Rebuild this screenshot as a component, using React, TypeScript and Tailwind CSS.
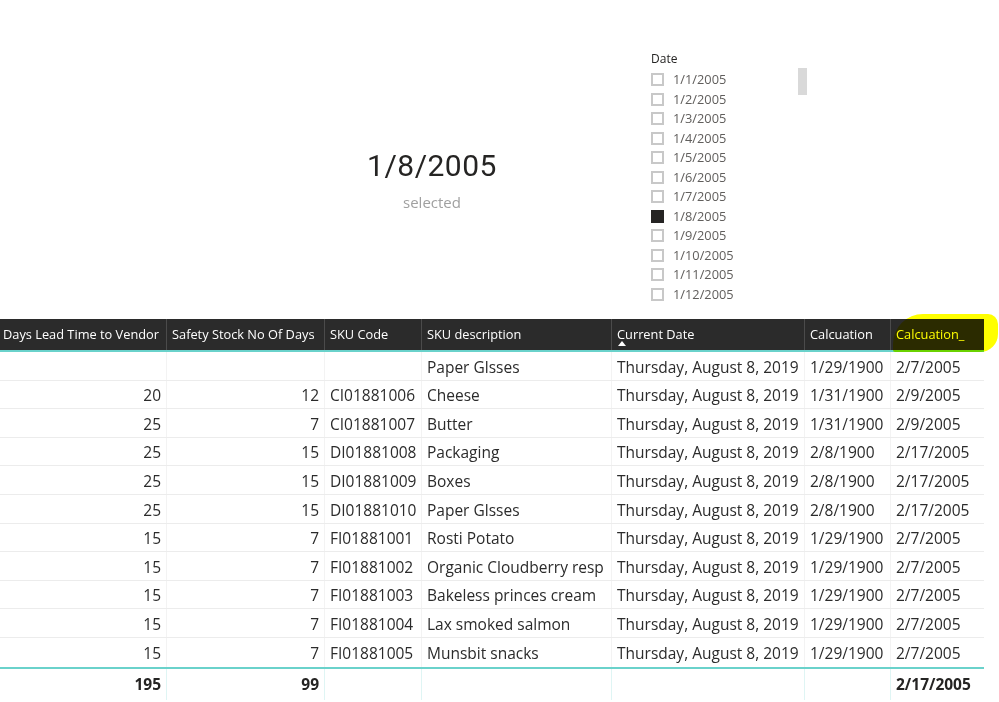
import React from "react";

const rows: string[][] = [
  ["", "", "", "Paper Glsses", "Thursday, August 8, 2019", "1/29/1900", "2/7/2005"],
  ["20", "12", "CI01881006", "Cheese", "Thursday, August 8, 2019", "1/31/1900", "2/9/2005"],
  ["25", "7", "CI01881007", "Butter", "Thursday, August 8, 2019", "1/31/1900", "2/9/2005"],
  ["25", "15", "DI01881008", "Packaging", "Thursday, August 8, 2019", "2/8/1900", "2/17/2005"],
  ["25", "15", "DI01881009", "Boxes", "Thursday, August 8, 2019", "2/8/1900", "2/17/2005"],
  ["25", "15", "DI01881010", "Paper Glsses", "Thursday, August 8, 2019", "2/8/1900", "2/17/2005"],
  ["15", "7", "FI01881001", "Rosti Potato", "Thursday, August 8, 2019", "1/29/1900", "2/7/2005"],
  ["15", "7", "FI01881002", "Organic Cloudberry resp", "Thursday, August 8, 2019", "1/29/1900", "2/7/2005"],
  ["15", "7", "FI01881003", "Bakeless princes cream", "Thursday, August 8, 2019", "1/29/1900", "2/7/2005"],
  ["15", "7", "FI01881004", "Lax smoked salmon", "Thursday, August 8, 2019", "1/29/1900", "2/7/2005"],
  ["15", "7", "FI01881005", "Munsbit snacks", "Thursday, August 8, 2019", "1/29/1900", "2/7/2005"],
];

const headers = [
  "Days Lead Time to Vendor",
  "Safety Stock No Of Days",
  "SKU Code",
  "SKU description",
  "Current Date",
  "Calcuation",
  "Calcuation_",
];

const dates = [
  "1/1/2005",
  "1/2/2005",
  "1/3/2005",
  "1/4/2005",
  "1/5/2005",
  "1/6/2005",
  "1/7/2005",
  "1/8/2005",
  "1/9/2005",
  "1/10/2005",
  "1/11/2005",
  "1/12/2005",
];

const grid = "grid grid-cols-[167px_158px_97px_190px_193px_86px_93px] w-[984px]";

export default function App() {
  return (
    <div
      className="relative w-[999px] h-[702px] bg-white overflow-hidden text-[#252423]"
      style={{ fontFamily: '"Open Sans", "Noto Sans", sans-serif' }}
    >
      {/* top section */}
      <div className="flex h-[319px]">
        <div className="ml-[282px] w-[300px] flex flex-col items-center pt-[144px]">
          <div
            className="text-[30px] leading-[44px] tracking-[0.5px] text-[#252423]"
            style={{ fontFamily: 'Roboto, "Liberation Sans", sans-serif' }}
          >
            1/8/2005
          </div>
          <div className="text-[15px] leading-[20px] text-[#a0a0a0] mt-[4px]">selected</div>
        </div>
        <div className="relative ml-[69px] pt-[50px] w-[160px]">
          <div className="text-[12px] leading-[18px] text-[#252423] mb-[2px]">Date</div>
          <div className="flex flex-col">
            {dates.map((d) => (
              <div key={d} className="flex items-center h-[19.5px]">
                {d === "1/8/2005" ? (
                  <div className="w-[13px] h-[13px] bg-[#252423]" />
                ) : (
                  <div className="w-[13px] h-[13px] border-[2px] border-[#c8c8c8] bg-white" />
                )}
                <span className="ml-[9px] text-[12.8px] leading-[19px] text-[#605e5c]">{d}</span>
              </div>
            ))}
          </div>
          <div className="absolute left-[147px] top-[68px] w-[9px] h-[27px] bg-[#d9d9d9]" />
        </div>
      </div>

      {/* table */}
      <div className="flex flex-col">
        <div className={`${grid} bg-[#2b2b2b] h-[31px]`}>
          {headers.map((h, i) => (
            <div
              key={h}
              className={`flex items-center text-[12.8px] text-white whitespace-nowrap overflow-hidden ${
                i === 0 ? "pl-[3px]" : "pl-[5px]"
              } ${i < 6 ? "border-r border-[#4b4b4b]" : ""}`}
            >
              {h}
            </div>
          ))}
        </div>
        <div className="w-[984px] h-[2px] bg-[#6ad2cb]" />
        {rows.map((r, ri) => (
          <div
            key={ri}
            className={`${grid} h-[28.6px] ${ri < rows.length - 1 ? "border-b border-[#ececec]" : ""}`}
          >
            {r.map((c, ci) => (
              <div
                key={ci}
                className={`flex items-center pt-[3px] text-[15.5px] text-[#2b2b2b] whitespace-nowrap overflow-hidden ${
                  ci < 2 ? "justify-end pr-[5px]" : "pl-[5px]"
                } ${ci < 6 ? "border-r border-[#f3f3f3]" : ""}`}
              >
                {c}
              </div>
            ))}
          </div>
        ))}
        <div className="w-[984px] h-[2px] bg-[#6ad2cb]" />
        <div className={`${grid} h-[31px]`}>
          {["195", "99", "", "", "", "", "2/17/2005"].map((c, ci) => (
            <div
              key={ci}
              className={`flex items-center pt-[1px] text-[15.5px] font-bold whitespace-nowrap ${
                ci < 2 ? "justify-end pr-[5px]" : "pl-[5px]"
              } ${ci < 6 ? "border-r border-[#dff5f4]" : ""}`}
            >
              {c}
            </div>
          ))}
        </div>
      </div>

      {/* sort arrow under Current Date */}
      <div className="absolute left-[618px] top-[341px] w-0 h-0 border-l-[4px] border-r-[4px] border-b-[5px] border-l-transparent border-r-transparent border-b-white" />

      {/* yellow highlighter */}
      <div className="absolute left-[893px] top-[314px] w-[105px] h-[38px] bg-[#ffff00] mix-blend-multiply rounded-tl-[30px] rounded-tr-[10px] rounded-br-[18px] rounded-bl-[2px]" />
    </div>
  );
}
